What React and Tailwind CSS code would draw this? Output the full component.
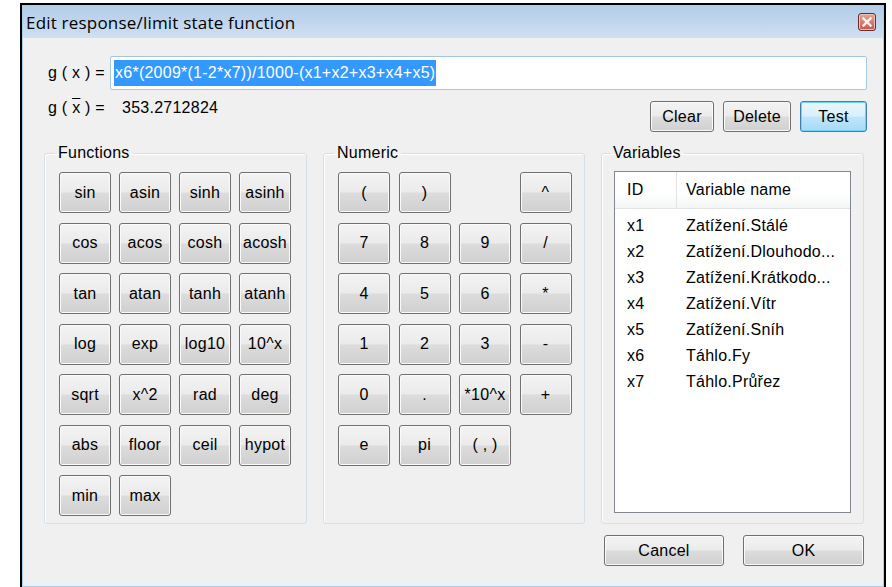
import React from "react";

const ui = "font-['Liberation_Sans',Arial,sans-serif] text-[16px] tracking-[0.25px] text-black";

const btnFrame = "flex items-center justify-center rounded-[3px] border leading-none";
const btnPlain =
  "border-[#707070] bg-[linear-gradient(#f3f3f3_0%,#ebebeb_48%,#dcdcdc_52%,#d0d0d0_100%)] shadow-[inset_0_0_0_1px_#fafafa]";
const btnDefault =
  "border-[#3c7fb1] bg-[linear-gradient(#eaf6fd_0%,#d9f0fc_48%,#bee6fd_52%,#a7d9f5_100%)] shadow-[inset_0_0_0_1px_#6fd5f8]";

const Btn = ({ children, primary = false, className = "" }) => (
  <button className={`${btnFrame} ${primary ? btnDefault : btnPlain} ${className}`}>{children}</button>
);

const functions = [
  "sin", "asin", "sinh", "asinh",
  "cos", "acos", "cosh", "acosh",
  "tan", "atan", "tanh", "atanh",
  "log", "exp", "log10", "10^x",
  "sqrt", "x^2", "rad", "deg",
  "abs", "floor", "ceil", "hypot",
  "min", "max",
];

// null leaves an empty slot in the keypad
const numeric = [
  "(", ")", null, "^",
  "7", "8", "9", "/",
  "4", "5", "6", "*",
  "1", "2", "3", "-",
  "0", ".", "*10^x", "+",
  "e", "pi", "( , )",
];

const variables = [
  ["x1", "Zatížení.Stálé"],
  ["x2", "Zatížení.Dlouhodo..."],
  ["x3", "Zatížení.Krátkodo..."],
  ["x4", "Zatížení.Vítr"],
  ["x5", "Zatížení.Sníh"],
  ["x6", "Táhlo.Fy"],
  ["x7", "Táhlo.Průřez"],
];

const Group = ({ title, className = "", children }) => (
  <fieldset className={`min-w-0 shrink-0 rounded-[3px] border border-[#d5dfe5] shadow-[inset_1px_1px_0_#ffffff] ${className}`}>
    <legend className="-ml-[4px] px-[3px] leading-[20px]">{title}</legend>
    {children}
  </fieldset>
);

const App = () => {
  return (
    <div className={`w-[892px] h-[587px] overflow-hidden bg-white pl-[20px] pt-[3px] ${ui}`}>
      <div className="w-[866px] h-[584px] border-2 border-b-0 border-black">
        <div className="h-full border border-[#a9cde8] bg-[#f0f0f0] flex flex-col">
          {/* title bar */}
          <div className="h-[32px] shrink-0 flex items-center pl-[3px] pr-[7px] bg-[linear-gradient(#b3cce8,#cfe0f1)]">
            <span className="font-['Open_Sans',sans-serif] text-[17px] tracking-[0.2px] leading-none text-black">
              Edit response/limit state function
            </span>
            <div className="ml-auto w-[18px] h-[18px] rounded-[3px] border border-[#6b2b24] bg-[linear-gradient(#e7a597,#c9554a)] shadow-[inset_0_0_0_1px_#f2c2b8] flex items-center justify-center">
              <svg width="10" height="10" viewBox="0 0 10 10">
                <path d="M1.5 1.5 L8.5 8.5 M8.5 1.5 L1.5 8.5" stroke="#f4f4f4" strokeWidth="2.4" strokeLinecap="square" />
              </svg>
            </div>
          </div>

          <div className="pl-[21px] pr-[16px] pt-[18px]">
            {/* expression */}
            <div className="flex items-center pl-[4px]">
              <span className="w-[62px] shrink-0 whitespace-pre">g ( x ) =</span>
              <div className="flex-1 h-[34px] rounded-[2px] border border-[#a5c7e2] bg-white flex items-center pl-[3px]">
                <span className="bg-[#3399ff] text-white leading-[26px] px-[1px]">
                  x6*(2009*(1-2*x7))/1000-(x1+x2+x3+x4+x5)
                </span>
              </div>
            </div>

            {/* value + actions */}
            <div className="flex items-start pl-[4px] mt-[11px]">
              <div className="flex -mt-[5px]">
                <span className="w-[74px] shrink-0 whitespace-pre">
                  g ( <span className="overline">x</span> ) =
                </span>
                <span>353.2712824</span>
              </div>
              <div className="ml-auto flex gap-[9px]">
                <Btn className="w-[64px] h-[31px]">Clear</Btn>
                <Btn className="w-[68px] h-[31px]">Delete</Btn>
                <Btn primary className="w-[67px] h-[31px]">Test</Btn>
              </div>
            </div>

            {/* groups */}
            <div className="flex gap-[16px] mt-[11px]">
              <Group title="Functions" className="w-[263px] pl-[14px] pt-[9px] pb-[7px]">
                <div className="grid grid-cols-[repeat(4,52px)] auto-rows-[41px] gap-x-[8px] gap-y-[9.5px]">
                  {functions.map((f) => (
                    <Btn key={f}>{f}</Btn>
                  ))}
                </div>
              </Group>

              <Group title="Numeric" className="w-[262px] pl-[14px] pt-[9px]">
                <div className="grid grid-cols-[repeat(4,52px)] auto-rows-[41px] gap-x-[8.5px] gap-y-[9.5px]">
                  {numeric.map((n, i) =>
                    n === null ? <div key={i} /> : <Btn key={i}>{n}</Btn>
                  )}
                </div>
              </Group>

              <Group title="Variables" className="w-[263px] px-[12px] pt-[8px] pb-[10px]">
                <div className="h-[342px] overflow-hidden border border-[#828790] bg-white">
                  <div className="h-[37px] flex bg-[linear-gradient(#ffffff_0%,#ffffff_60%,#f4f5f6_100%)] border-b border-[#e2e3e5]">
                    <div className="w-[62px] flex items-center pl-[12px] border-r border-[#e2e3e5]">ID</div>
                    <div className="flex-1 flex items-center pl-[9px]">Variable name</div>
                  </div>
                  <div className="pt-[4px]">
                    {variables.map(([id, name]) => (
                      <div key={id} className="h-[26px] flex items-center">
                        <span className="w-[71px] shrink-0 pl-[12px]">{id}</span>
                        <span className="whitespace-nowrap">{name}</span>
                      </div>
                    ))}
                  </div>
                </div>
              </Group>
            </div>

            {/* dialog buttons */}
            <div className="flex justify-end gap-[19px] mt-[11px] pr-[3px]">
              <Btn className="w-[120px] h-[31px]">Cancel</Btn>
              <Btn className="w-[121px] h-[31px]">OK</Btn>
            </div>
          </div>
        </div>
      </div>
    </div>
  );
};

export default App;
